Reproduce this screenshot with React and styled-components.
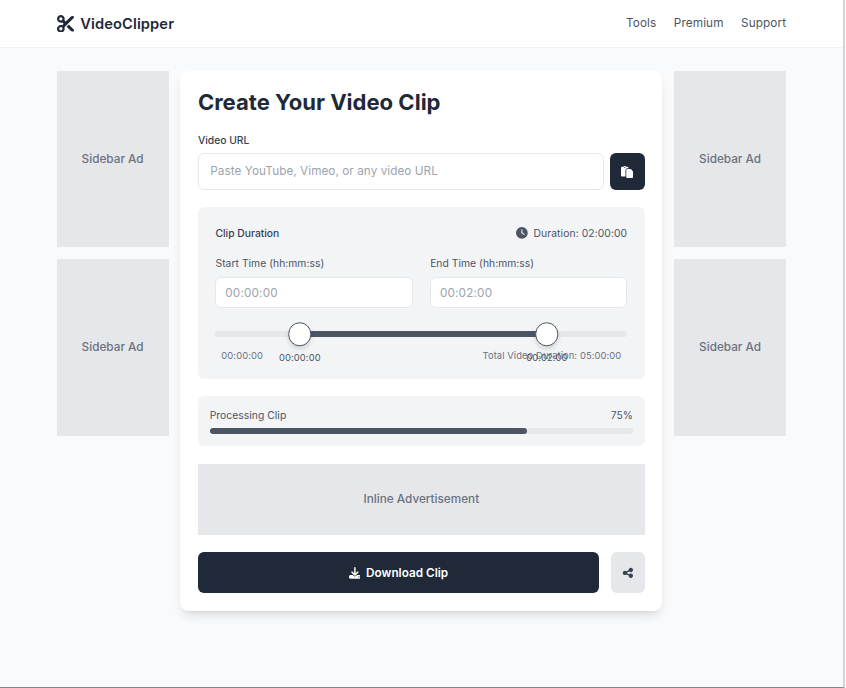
import React from "react";
import styled, { createGlobalStyle } from "styled-components";
import { FaScissors, FaPaste, FaClock, FaDownload, FaShareNodes } from "react-icons/fa6";

const GlobalStyle = createGlobalStyle`
  *, *::before, *::after { box-sizing: border-box; }
  html { font-size: 11.76px; }
  body {
    margin: 0;
    background: #fff;
    font-family: Inter, sans-serif;
    color: #1f2937;
    overflow: hidden;
  }
  button, input { font-family: inherit; }
  svg { display: block; flex: none; }
`;

const Page = styled.div`
  width: 845px;
  height: 688px;
  background: #f9fafb;
  border-right: 2px solid #d1d5db;
  border-bottom: 1px solid #85888d;
`;

const Header = styled.header`
  height: 47px;
  padding: 0 56.8px 0 56.6px;
  display: flex;
  align-items: center;
  justify-content: space-between;
  background: #fff;
  box-shadow: 0 1px 1px rgba(0, 0, 0, 0.03);
`;

const Brand = styled.div`
  display: flex;
  align-items: center;
  gap: 6px;
  font-size: 14.7px;
  font-weight: 600;
  letter-spacing: 0.1px;
`;

const Nav = styled.nav`
  display: flex;
  gap: 17.4px;
`;

const NavLink = styled.a`
  font-size: 11.76px;
  line-height: 17.6px;
  letter-spacing: 0.12px;
  color: #4b5563;
`;

const Main = styled.main`
  display: grid;
  grid-template-columns: 112px 482.1px 112px;
  column-gap: 11.7px;
  align-items: start;
  padding: 24px 56px 0 56.6px;
`;

const Sidebar = styled.aside`
  display: grid;
  gap: 11.8px;
`;

const Ad = styled.div`
  height: ${(p) => p.$height}px;
  display: flex;
  align-items: center;
  justify-content: center;
  background: #e5e7eb;
  color: #6b7280;
  font-size: 11.76px;
  font-weight: 500;
`;

const Card = styled.section`
  height: 540px;
  padding: 17.6px;
  background: #fff;
  border-radius: 8.8px;
  box-shadow: 0 7px 11px -2px rgba(0, 0, 0, 0.1), 0 3px 4.5px -3px rgba(0, 0, 0, 0.1);
`;

const Title = styled.h1`
  margin: 0 0 17.6px;
  font-size: 22.05px;
  line-height: 26.5px;
  font-weight: 700;
`;

const Label = styled.label`
  display: block;
  font-size: 10.3px;
  line-height: 14.7px;
  font-weight: ${(p) => (p.$strong ? 500 : 400)};
  letter-spacing: ${(p) => (p.$strong ? 0 : 0.05)}px;
  color: ${(p) => (p.$strong ? "#374151" : "#4b5563")};
`;

const UrlRow = styled.div`
  display: flex;
  gap: 5.9px;
  margin-top: 5.8px;
`;

const TextInput = styled.input`
  display: block;
  width: 100%;
  min-width: 0;
  height: ${(p) => (p.$compact ? 31 : 36.7)}px;
  padding: ${(p) => (p.$compact ? "1px 8.8px 0" : "0 11.4px 1.4px")};
  border: 1px solid #e5e7eb;
  border-radius: 5.88px;
  background: #fff;
  font-size: 11.76px;
  letter-spacing: ${(p) => (p.$compact ? 0.16 : 0.05)}px;
  outline: none;
  &::placeholder { color: #9ca3af; opacity: 1; }
`;

const Button = styled.button`
  flex: ${(p) => (p.$width ? "none" : 1)};
  width: ${(p) => (p.$width ? `${p.$width}px` : "auto")};
  height: ${(p) => p.$height}px;
  padding: 0;
  border: 0;
  border-radius: 5.88px;
  display: flex;
  align-items: center;
  justify-content: center;
  gap: 5.6px;
  background: ${(p) => (p.$light ? "#e5e7eb" : "#1f2937")};
  color: ${(p) => (p.$light ? "#374151" : "#fff")};
  font-size: 11.76px;
  font-weight: 600;
`;

const DurationPanel = styled.div`
  height: 171.3px;
  margin-top: 17.6px;
  padding: 18.2px 17.6px 0;
  border-radius: 5.88px;
  background: #f3f4f6;
`;

const SpreadRow = styled.div`
  display: flex;
  justify-content: space-between;
  align-items: center;
`;

const Duration = styled.div`
  display: flex;
  align-items: center;
  gap: 6px;
  font-size: 10.3px;
  line-height: 14.7px;
  letter-spacing: 0.1px;
  color: #4b5563;
`;

const TimeFields = styled.div`
  display: grid;
  grid-template-columns: 1fr 1fr;
  gap: 17.6px;
  margin-top: 15.3px;
`;

const Field = styled.div`
  display: grid;
  gap: 6.4px;
`;

const Track = styled.div`
  position: relative;
  height: 6px;
  margin-top: 23.7px;
  border-radius: 3px;
  background: #e5e7eb;
`;

const Range = styled.div`
  position: absolute;
  left: 20.5%;
  right: 19.5%;
  top: 0;
  height: 6px;
  background: #4b5563;
`;

const Knob = styled.div`
  position: absolute;
  left: ${(p) => p.$at}%;
  top: 50%;
  width: 23.5px;
  height: 23.5px;
  border: 1.4px solid #4b5563;
  border-radius: 50%;
  background: #fff;
  transform: translate(-50%, -50%);
  box-shadow: 0 3px 4.5px rgba(0, 0, 0, 0.12);
`;

const KnobTime = styled.span`
  position: absolute;
  left: ${(p) => p.$at}%;
  top: 20.1px;
  transform: translateX(-50%);
  font-size: 9.4px;
  line-height: 12px;
  letter-spacing: 0.1px;
  color: #4b5563;
`;

const Scale = styled.div`
  display: flex;
  justify-content: space-between;
  margin-top: 12.3px;
  padding: 0 5.9px;
  font-size: 9.4px;
  line-height: 12px;
  letter-spacing: 0.09px;
  color: #6b7280;
`;

const Progress = styled.div`
  height: 50px;
  margin: 17.6px 0;
  padding: 11.8px;
  border-radius: 5.88px;
  background: #f3f4f6;
`;

const Bar = styled.div`
  height: 6px;
  margin-top: 5.6px;
  border-radius: 3px;
  background: #e5e7eb;
`;

const BarFill = styled.div`
  width: 75%;
  height: 100%;
  border-radius: 3px;
  background: #4b5563;
`;

const Actions = styled.div`
  display: flex;
  gap: 11.8px;
  margin-top: 17.6px;
`;

const SideAds = () => (
  <Sidebar>
    <Ad $height={176.4}>Sidebar Ad</Ad>
    <Ad $height={176.4}>Sidebar Ad</Ad>
  </Sidebar>
);

export default function App() {
  return (
    <>
      <GlobalStyle />
      <Page>
        <Header>
          <Brand>
            <FaScissors size={17.6} />
            VideoClipper
          </Brand>
          <Nav>
            <NavLink>Tools</NavLink>
            <NavLink>Premium</NavLink>
            <NavLink>Support</NavLink>
          </Nav>
        </Header>
        <Main>
          <SideAds />
          <Card>
            <Title>Create Your Video Clip</Title>
            <Label $strong htmlFor="url">Video URL</Label>
            <UrlRow>
              <TextInput id="url" placeholder="Paste YouTube, Vimeo, or any video URL" />
              <Button $width={35.2} $height={36.7} aria-label="Paste">
                <FaPaste size={12} />
              </Button>
            </UrlRow>
            <DurationPanel>
              <SpreadRow>
                <Label $strong as="span">Clip Duration</Label>
                <Duration>
                  <FaClock size={11.76} />
                  Duration: 02:00:00
                </Duration>
              </SpreadRow>
              <TimeFields>
                <Field>
                  <Label htmlFor="start">Start Time (hh:mm:ss)</Label>
                  <TextInput id="start" $compact placeholder="00:00:00" />
                </Field>
                <Field>
                  <Label htmlFor="end">End Time (hh:mm:ss)</Label>
                  <TextInput id="end" $compact placeholder="00:02:00" />
                </Field>
              </TimeFields>
              <Track>
                <Range />
                <Knob $at={20.5} />
                <Knob $at={80.5} />
                <KnobTime $at={20.5}>00:00:00</KnobTime>
                <KnobTime $at={80.5}>00:02:00</KnobTime>
              </Track>
              <Scale>
                <span>00:00:00</span>
                <span>Total Video Duration: 05:00:00</span>
              </Scale>
            </DurationPanel>
            <Progress>
              <SpreadRow>
                <Label as="span">Processing Clip</Label>
                <Label as="span">75%</Label>
              </SpreadRow>
              <Bar>
                <BarFill />
              </Bar>
            </Progress>
            <Ad $height={70.6}>Inline Advertisement</Ad>
            <Actions>
              <Button $height={41.1}>
                <FaDownload size={11.76} />
                Download Clip
              </Button>
              <Button $light $width={34} $height={41.1} aria-label="Share">
                <FaShareNodes size={11.76} />
              </Button>
            </Actions>
          </Card>
          <SideAds />
        </Main>
      </Page>
    </>
  );
}
